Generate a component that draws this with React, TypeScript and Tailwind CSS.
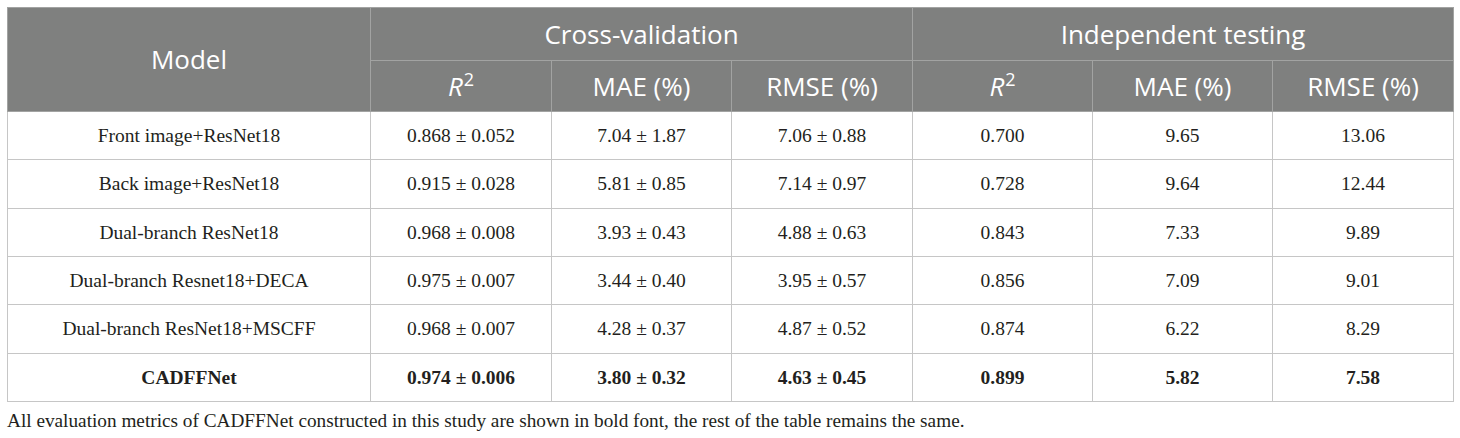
const rows = [
  ["Front image+ResNet18", "0.868 ± 0.052", "7.04 ± 1.87", "7.06 ± 0.88", "0.700", "9.65", "13.06"],
  ["Back image+ResNet18", "0.915 ± 0.028", "5.81 ± 0.85", "7.14 ± 0.97", "0.728", "9.64", "12.44"],
  ["Dual-branch ResNet18", "0.968 ± 0.008", "3.93 ± 0.43", "4.88 ± 0.63", "0.843", "7.33", "9.89"],
  ["Dual-branch Resnet18+DECA", "0.975 ± 0.007", "3.44 ± 0.40", "3.95 ± 0.57", "0.856", "7.09", "9.01"],
  ["Dual-branch ResNet18+MSCFF", "0.968 ± 0.007", "4.28 ± 0.37", "4.87 ± 0.52", "0.874", "6.22", "8.29"],
  ["CADFFNet", "0.974 ± 0.006", "3.80 ± 0.32", "4.63 ± 0.45", "0.899", "5.82", "7.58"],
];

const sans = "font-['Open_Sans','Noto_Sans',sans-serif]";

function R2() {
  return (
    <span>
      <i>R</i>
      <sup className="text-[18px] -top-[0.55em] ml-[1px]">2</sup>
    </span>
  );
}

export default function App() {
  return (
    <div className="bg-white w-[1460px] h-[438px] pl-[7px] pt-[7px]">
      <table className="border-collapse w-[1446px] table-fixed border border-[#c6c6c6]">
        <colgroup>
          <col className="w-[363px]" />
          <col className="w-[181px]" />
          <col className="w-[180px]" />
          <col className="w-[181px]" />
          <col className="w-[180px]" />
          <col className="w-[180px]" />
          <col className="w-[181px]" />
        </colgroup>
        <thead className={`${sans} text-white text-[26px] font-normal bg-[#7f807f]`}>
          <tr className="h-[53px]">
            <th rowSpan={2} className="font-normal border border-[#a2a3a2] align-middle">
              Model
            </th>
            <th colSpan={3} className="font-normal border border-[#a2a3a2]">
              Cross-validation
            </th>
            <th colSpan={3} className="font-normal border border-[#a2a3a2]">
              Independent testing
            </th>
          </tr>
          <tr className="h-[51px]">
            <th className="font-normal border border-[#a2a3a2]"><R2 /></th>
            <th className="font-normal border border-[#a2a3a2]">MAE (%)</th>
            <th className="font-normal border border-[#a2a3a2]">RMSE (%)</th>
            <th className="font-normal border border-[#a2a3a2]"><R2 /></th>
            <th className="font-normal border border-[#a2a3a2]">MAE (%)</th>
            <th className="font-normal border border-[#a2a3a2]">RMSE (%)</th>
          </tr>
        </thead>
        <tbody className="font-['Liberation_Serif',serif] text-[19.5px] text-[#231f20]">
          {rows.map((r, i) => (
            <tr key={r[0]} className={`h-[48.33px] ${i === rows.length - 1 ? "font-bold" : ""}`}>
              {r.map((c, j) => (
                <td key={j} className="border border-[#c6c6c6] text-center align-middle">
                  {c}
                </td>
              ))}
            </tr>
          ))}
        </tbody>
      </table>
      <p className="mt-[6px] font-['Liberation_Serif',serif] text-[19.25px] text-[#231f20] leading-[26px]">
        All evaluation metrics of CADFFNet constructed in this study are shown in bold font, the rest of the table remains the same.
      </p>
    </div>
  );
}
